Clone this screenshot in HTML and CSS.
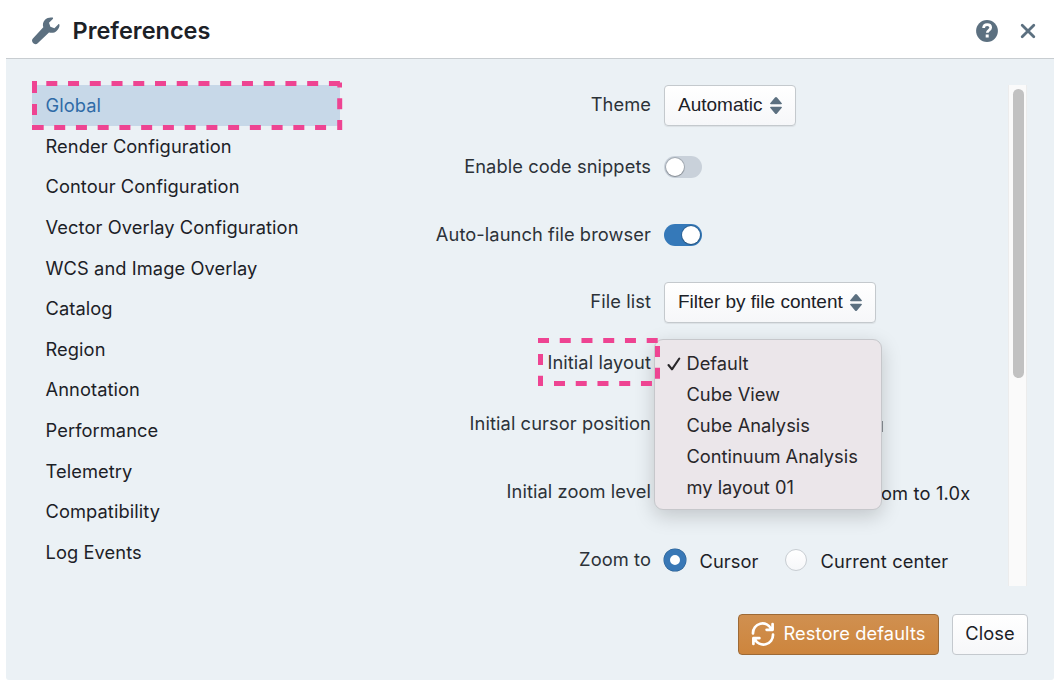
FILE: index.html
```
<!DOCTYPE html>
<html lang="en">
<head>
<meta charset="utf-8">
<title>Preferences</title>
<link rel="stylesheet" href="styles.css">
</head>
<body>
<div class="dialog">
  <header class="header">
    <svg class="wrench" width="28" height="28" viewBox="0 0 28 28"><path d="M27.1 7.2c-.3-.2-.7 0-.9.2l-3.8 3.8-4-1.4-1.4-4L20.800 2c.3-.3.4-.7.200-1-.1-.3-.3-.4-.5-.4-2.800-.4-5.500.2-7.500 2.200-2 2-2.600 4.900-1.700 7.500L.9 21.500C.3 22.100 0 22.800 0 23.600c0 1.900 1.600 3.600 3.500 3.600.9 0 1.600-.3 2.200-.9L17 15.400c2.700 1 5.700.4 7.800-1.700 1.900-1.900 2.900-3.900 2.700-6 0-.2-.2-.4-.4-.5z" fill="#5c7080"/></svg>
    <h1 class="title">Preferences</h1>
    <svg class="help" width="22" height="22" viewBox="0 0 22 22"><circle cx="11" cy="11" r="10.900" fill="#5c7080"/><path d="M7.600 8.100C7.600 5.700 9 4.600 11.200 4.600s3.500 1.200 3.500 3c0 2.600-3.400 2.700-3.400 5.200" fill="none" stroke="#fff" stroke-width="2.700"/><rect x="9.700" y="14.500" width="3" height="3" fill="#fff"/></svg>
    <svg class="x" width="16" height="16" viewBox="0 0 16 16"><path d="M2.200 2.200 13.800 13.800M13.800 2.200 2.200 13.800" stroke="#5c7080" stroke-width="2.800" stroke-linecap="round"/></svg>
  </header>
  <main class="body">
    <nav class="tabs">
      <div class="tab active">Global</div>
      <div class="tab">Render Configuration</div>
      <div class="tab">Contour Configuration</div>
      <div class="tab">Vector Overlay Configuration</div>
      <div class="tab">WCS and Image Overlay</div>
      <div class="tab">Catalog</div>
      <div class="tab">Region</div>
      <div class="tab">Annotation</div>
      <div class="tab">Performance</div>
      <div class="tab">Telemetry</div>
      <div class="tab">Compatibility</div>
      <div class="tab">Log Events</div>
    </nav>
    <section class="panel">
      <div class="row"><label class="label">Theme</label><div class="select theme">Automatic<svg class="caret" width="12" height="17" viewBox="0 0 12 17"><path d="M1 7.300h10c1 0 1.200-.8.600-1.400L7 .6C6.400-.1 5.600-.1 5 .6L.4 5.900C-.2 6.500 0 7.300 1 7.300zM1 9.700h10c1 0 1.200.8.600 1.400L7 16.400c-.6.700-1.400.7-2 0L.4 11.100C-.2 10.500 0 9.700 1 9.700z" fill="#5c7080"/></svg></div></div>
      <div class="row snippets"><label class="label">Enable code snippets</label><span class="switch"><i class="knob"></i></span></div>
      <div class="row launch"><label class="label">Auto-launch file browser</label><span class="switch on"><i class="knob"></i></span></div>
      <div class="row files"><label class="label">File list</label><div class="select filter">Filter by file content<svg class="caret" width="12" height="17" viewBox="0 0 12 17"><path d="M1 7.300h10c1 0 1.200-.8.600-1.400L7 .6C6.400-.1 5.600-.1 5 .6L.4 5.900C-.2 6.500 0 7.300 1 7.300zM1 9.700h10c1 0 1.200.8.600 1.400L7 16.400c-.6.700-1.400.7-2 0L.4 11.100C-.2 10.500 0 9.700 1 9.700z" fill="#5c7080"/></svg></div></div>
      <div class="row layout"><label class="label">Initial layout</label></div>
      <div class="row cursor"><label class="label">Initial cursor position</label><span class="sliver"></span></div>
      <div class="row level"><label class="label">Initial zoom level</label><span class="option zoomed">om to 1.0x</span></div>
      <div class="row zoom"><label class="label">Zoom to</label><span class="radio checked"></span><span class="option first">Cursor</span><span class="radio second"></span><span class="option last">Current center</span></div>
    </section>
    <div class="scrollbar"><div class="thumb"></div></div>
  </main>
  <footer class="footer">
    <button class="button restore"><svg width="24" height="24" viewBox="0 0 24 24" fill="none" stroke="#fff" stroke-width="2.700" stroke-linecap="round" stroke-linejoin="round"><path d="M2 11.500A9.600 9.600 0 0 1 20.300 7M22 12.500A9.600 9.600 0 0 1 3.700 17M21.600 2v5.800h-6M2.400 22v-5.800h6"/></svg><span class="button-text">Restore defaults</span></button>
    <button class="button close"><span class="button-text">Close</span></button>
  </footer>
</div>
<div class="menu">
  <div class="item"><svg class="check" width="14" height="14" viewBox="0 0 14 14"><path d="M1.500 8 5 12.300 12.300 1.500" fill="none" stroke="#29272a" stroke-width="2.100" stroke-linecap="round" stroke-linejoin="round"/></svg>Default</div>
  <div class="item">Cube View</div>
  <div class="item">Cube Analysis</div>
  <div class="item">Continuum Analysis</div>
  <div class="item">my layout 01</div>
</div>
<svg class="marks" width="1060" height="680" viewBox="0 0 1060 680" fill="none" stroke="#ee4492" stroke-width="5" stroke-dasharray="11 10.740">
  <path d="M46.300 83.500H340M34.500 104V115.500M34.500 125.500V130M54.200 127.500H327M339.700 98.300V130"/>
  <path stroke-dasharray="none" d="M34.500 81V93M32 127.500H43.700M337.300 85H342"/>
  <path d="M538 340.500H658M540.500 354V386M554 383.500H652M657.500 346V379"/>
</svg>
</body>
</html>
```
FILE: styles.css
```
* { box-sizing: border-box; }
body { margin: 0; width: 1060px; height: 680px; overflow: hidden; background: #fff; color: #1c2127; font: 18.300px/24px Inter, "Liberation Sans", sans-serif; position: relative; }
.dialog { width: 1048px; height: 680px; margin-left: 6px; background: #ebf1f5; display: flex; flex-direction: column; border-radius: 0 0 3px 3px; }
.header { height: 59px; background: #fff; border-bottom: 1px solid #c8cdd1; display: flex; align-items: center; padding: 3px 18px 0 26px; }
.title { margin: 0 auto 0 12.500px; font-size: 23.500px; font-weight: 600; line-height: 30px; }
.x { margin-left: 22px; }
.body { display: flex; height: 527px; padding-top: 26px; }
.tabs { width: 308px; margin-left: 26px; letter-spacing: .08px; }
.tab { height: 40.650px; padding-left: 13.500px; line-height: 40px; white-space: nowrap; }
.active { color: #2f6ba7; background: #c7d8e8; border-radius: 4px; }
.panel { width: 668px; letter-spacing: .08px; }
.row { display: flex; align-items: center; height: 40px; white-space: nowrap; }
.label { width: 311px; margin-right: 13px; padding-bottom: 2px; text-align: right; color: #2c3238; }
.snippets { margin-top: 22px; }
.launch { margin-top: 28px; }
.files { margin-top: 27px; }
.layout, .cursor { margin-top: 21px; }
.level, .zoom { margin-top: 28px; }
.select { height: 41px; border: 1px solid #c4c9cd; border-radius: 4px; background: linear-gradient(#fff, #f6f7f9); box-shadow: 0 1px 1px #0001; font: 19px/38px "Liberation Sans", Arial, sans-serif; letter-spacing: 0; padding: 0 13px; display: flex; align-items: center; justify-content: space-between; }
.theme { width: 132px; }
.filter { width: 212px; }
.switch { width: 38px; height: 22px; border-radius: 11px; background: #c9d1da; padding: 2px; display: flex; }
.knob { width: 18px; height: 18px; border-radius: 50%; background: #fff; box-shadow: 0 0 0 1px #11141833, 0 1px 1px #11141833; }
.on { background: #3579b9; justify-content: flex-end; }
.sliver { width: 2px; height: 11px; margin: 4px 0 0 217px; background: #8a9096; }
.option { padding-top: 1px; }
.zoomed { margin-left: 217px; letter-spacing: .15px; }
.radio { width: 22px; height: 22px; border-radius: 50%; border: 1px solid #c8cdd2; background: linear-gradient(#fff, #f6f7f9); }
.checked { border: 6px solid #3978b6; background: #fff; box-shadow: 0 0 0 .5px #255b8d; }
.first { margin-left: 13.500px; }
.second { margin-left: 26px; }
.last { margin-left: 14px; letter-spacing: .15px; }
.scrollbar { width: 19px; height: 501px; background: #fafafa; border: solid #ececec; border-width: 0 1px; padding: 4px 3px 4px 4px; }
.thumb { width: 11px; height: 289px; border-radius: 6px; background: #c1c1c1; }
.footer { display: flex; justify-content: flex-end; gap: 13px; padding: 27.500px 26px 0; }
.button { height: 41px; border: 1px solid #c4c9ce; border-radius: 4px; background: linear-gradient(#fff, #f6f7f9); font: inherit; color: #1c2127; padding: 0; display: flex; align-items: center; justify-content: center; white-space: nowrap; }
.button-text { padding-bottom: 2px; letter-spacing: .1px; }
.restore { width: 201px; gap: 8px; background: linear-gradient(#d09050, #cd853d); border-color: #9d6a36; color: #fff; }
.close { width: 76px; }
.menu { position: absolute; left: 654px; top: 339px; width: 228px; height: 171px; padding-top: 7.500px; border-radius: 9px; background: #ebe6ea; border: 1px solid #c6c7cb; box-shadow: 0 6px 20px #0000002e; color: #29272a; }
.item { position: relative; height: 31.200px; line-height: 31.200px; padding-left: 31.500px; white-space: nowrap; }
.check { position: absolute; left: 11.500px; top: 9px; }
.marks { position: absolute; left: 0; top: 0; }
```
